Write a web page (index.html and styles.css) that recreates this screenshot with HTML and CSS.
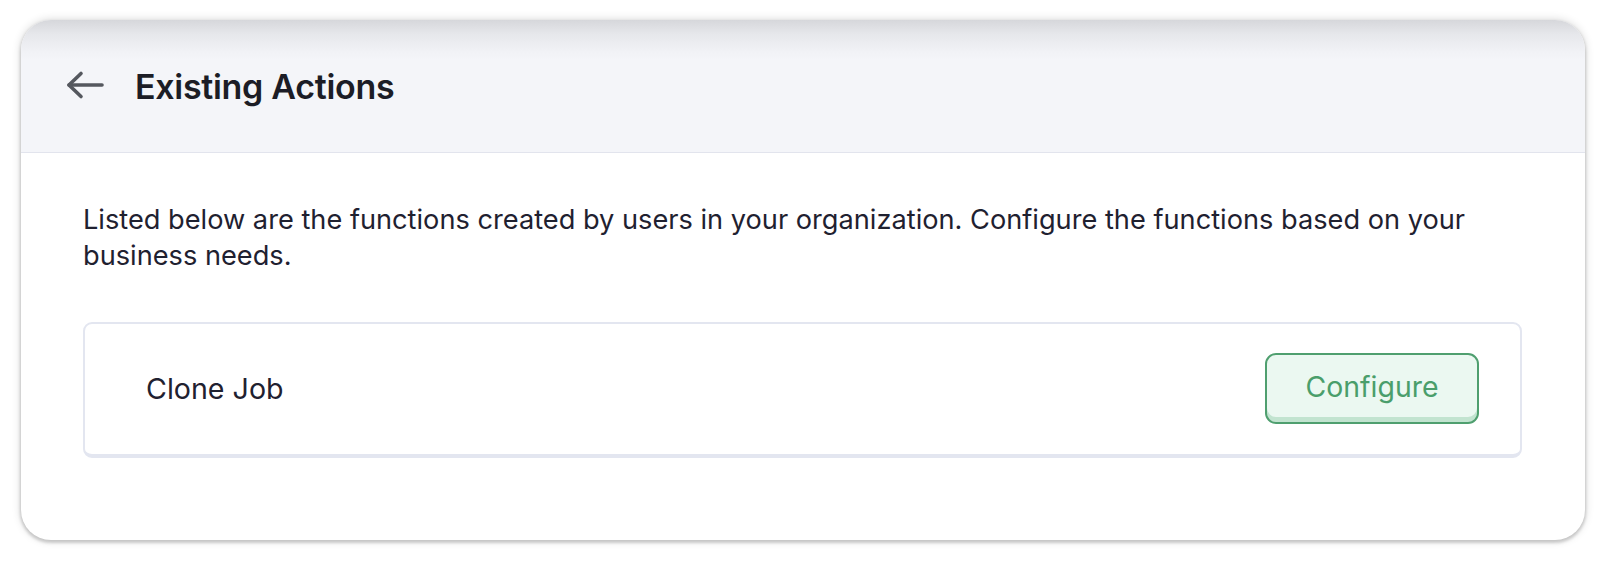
FILE: index.html
```html
<!DOCTYPE html>
<html lang="en">
<head>
<meta charset="utf-8">
<title>Existing Actions</title>
<link rel="stylesheet" href="styles.css">
</head>
<body>
  <div class="card">
    <header class="card-header">
      <button class="back" aria-label="Back">
        <svg width="38" height="30" viewBox="0 0 38 30" fill="none" stroke="#55585f" stroke-width="3.6" stroke-linecap="round" stroke-linejoin="round">
          <path d="M36 15H3"/>
          <path d="M15 3.5L3 15L15 26.5"/>
        </svg>
      </button>
      <h1 class="title">Existing Actions</h1>
    </header>
    <div class="card-body">
      <p class="desc">Listed below are the functions created by users in your organization. Configure the functions based on your business needs.</p>
      <div class="row">
        <span class="row-name">Clone Job</span>
        <button class="configure">Configure</button>
      </div>
    </div>
  </div>
</body>
</html>
```

FILE: styles.css
```css
* { box-sizing: border-box; }
html, body { margin: 0; padding: 0; background: #ffffff; }
body {
  font-family: Inter, "Noto Sans", sans-serif;
  padding: 20px 27px 28px 21px;
}
.card {
  width: 1564px;
  height: 520px;
  border-radius: 30px;
  background: #ffffff;
  overflow: hidden;
  box-shadow: 0 0 10px rgba(0,0,0,0.16), 0 2px 3px 1px rgba(0,0,0,0.16);
}
.card-header {
  height: 133px;
  display: flex;
  align-items: center;
  padding-left: 45px;
  gap: 31px;
  background: linear-gradient(#d6d7db 0px, #e6e7eb 14px, #f1f2f6 32px, #f4f5f9 40px);
  border-bottom: 1px solid #e2e4ed;
}
.back {
  border: 0;
  background: none;
  padding: 0;
  margin-top: -2px;
  display: flex;
  cursor: pointer;
}
.title {
  margin: 0;
  font-size: 34px;
  font-weight: 600;
  color: #1c1d26;
  letter-spacing: -0.3px;
}
.card-body {
  padding: 49px 63px 0 62px;
}
.desc {
  margin: 0;
  font-size: 27.2px;
  line-height: 36px;
  color: #1f2130;
}
.row {
  margin-top: 48px;
  height: 136px;
  display: flex;
  align-items: center;
  justify-content: space-between;
  padding: 0 41px 2px 61px;
  border: 2px solid #e3e6f0;
  border-bottom-width: 4px;
  border-radius: 9px;
}
.row-name {
  font-size: 28.6px;
  color: #1f2130;
}
.configure {
  width: 214px;
  height: 71px;
  border: 2px solid #4f9f6f;
  border-radius: 11px;
  background: #ebf8f1;
  box-shadow: inset 0 -5px 0 #c2e4d0;
  color: #4a9e6b;
  font-family: Inter, "Noto Sans", sans-serif;
  font-size: 28.4px;
  padding: 0 0 3px;
  cursor: pointer;
}
```
